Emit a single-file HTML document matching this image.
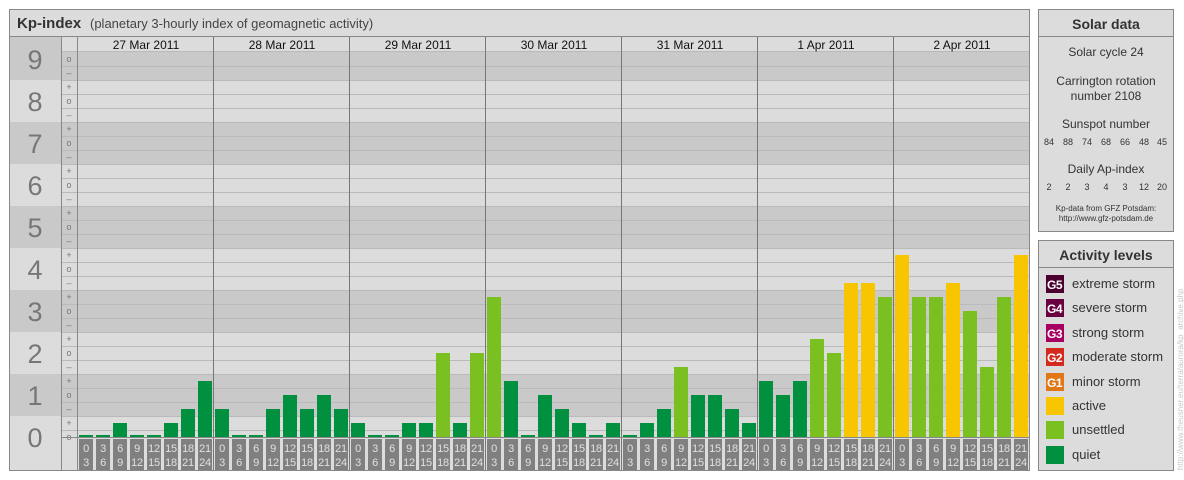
<!DOCTYPE html>
<html><head><meta charset="utf-8"><style>
html,body{margin:0;padding:0;background:#fff;width:1184px;height:480px;overflow:hidden}
svg text{font-family:"Liberation Sans",Arial,sans-serif}
</style></head><body>
<svg width="1184" height="480" viewBox="0 0 1184 480" xmlns="http://www.w3.org/2000/svg">
<rect x="0" y="0" width="1184" height="480" fill="#fff"/>
<!-- main panel -->
<rect x="9.5" y="9.5" width="1020" height="461" fill="#dcdcdc" stroke="#888"/>
<line x1="10" y1="36.5" x2="1029" y2="36.5" stroke="#888"/>
<text x="17" y="28" font-size="15" font-weight="bold" fill="#333">Kp-index</text>
<text x="90" y="28" font-size="13" fill="#444">(planetary 3-hourly index of geomagnetic activity)</text>
<!-- bands -->
<g fill="#c9c9c9">
<rect x="10" y="37" width="51" height="43"/><rect x="62" y="52" width="967" height="28"/>
<rect x="10" y="122" width="51" height="42"/><rect x="62" y="122" width="967" height="42"/>
<rect x="10" y="206" width="51" height="42"/><rect x="62" y="206" width="967" height="42"/>
<rect x="10" y="290" width="51" height="42"/><rect x="62" y="290" width="967" height="42"/>
<rect x="10" y="374" width="51" height="42"/><rect x="62" y="374" width="967" height="42"/>
</g>
<g stroke="#bababa" stroke-width="1">
<line x1="62" x2="1029" y1="430.5" y2="430.5"/><line x1="62" x2="1029" y1="416.5" y2="416.5"/><line x1="62" x2="1029" y1="402.5" y2="402.5"/><line x1="62" x2="1029" y1="388.5" y2="388.5"/><line x1="62" x2="1029" y1="374.5" y2="374.5"/><line x1="62" x2="1029" y1="360.5" y2="360.5"/><line x1="62" x2="1029" y1="346.5" y2="346.5"/><line x1="62" x2="1029" y1="332.5" y2="332.5"/><line x1="62" x2="1029" y1="318.5" y2="318.5"/><line x1="62" x2="1029" y1="304.5" y2="304.5"/><line x1="62" x2="1029" y1="290.5" y2="290.5"/><line x1="62" x2="1029" y1="276.5" y2="276.5"/><line x1="62" x2="1029" y1="262.5" y2="262.5"/><line x1="62" x2="1029" y1="248.5" y2="248.5"/><line x1="62" x2="1029" y1="234.5" y2="234.5"/><line x1="62" x2="1029" y1="220.5" y2="220.5"/><line x1="62" x2="1029" y1="206.5" y2="206.5"/><line x1="62" x2="1029" y1="192.5" y2="192.5"/><line x1="62" x2="1029" y1="178.5" y2="178.5"/><line x1="62" x2="1029" y1="164.5" y2="164.5"/><line x1="62" x2="1029" y1="150.5" y2="150.5"/><line x1="62" x2="1029" y1="136.5" y2="136.5"/><line x1="62" x2="1029" y1="122.5" y2="122.5"/><line x1="62" x2="1029" y1="108.5" y2="108.5"/><line x1="62" x2="1029" y1="94.5" y2="94.5"/><line x1="62" x2="1029" y1="80.5" y2="80.5"/><line x1="62" x2="1029" y1="66.5" y2="66.5"/><line x1="62" x2="1029" y1="51.5" y2="51.5"/>
</g>
<!-- columns -->
<g stroke="#888"><line x1="61.5" y1="37" x2="61.5" y2="470"/><line x1="77.5" y1="37" x2="77.5" y2="470"/></g>
<g stroke="#777"><line x1="213.5" y1="37" x2="213.5" y2="470"/><line x1="349.5" y1="37" x2="349.5" y2="470"/><line x1="485.5" y1="37" x2="485.5" y2="470"/><line x1="621.5" y1="37" x2="621.5" y2="470"/><line x1="757.5" y1="37" x2="757.5" y2="470"/><line x1="893.5" y1="37" x2="893.5" y2="470"/></g>
<!-- big digits -->
<g font-size="27" fill="#777" text-anchor="middle">
<text x="35" y="69">9</text><text x="35" y="111">8</text><text x="35" y="153">7</text><text x="35" y="195">6</text><text x="35" y="237">5</text><text x="35" y="279">4</text><text x="35" y="321">3</text><text x="35" y="363">2</text><text x="35" y="405">1</text><text x="35" y="447">0</text>
</g>
<!-- small labels -->
<g font-size="9" fill="#777" text-anchor="middle">
<text x="69" y="62">o</text><text x="69" y="76">–</text><text x="69" y="90">+</text><text x="69" y="104">o</text><text x="69" y="118">–</text><text x="69" y="132">+</text><text x="69" y="146">o</text><text x="69" y="160">–</text><text x="69" y="174">+</text><text x="69" y="188">o</text><text x="69" y="202">–</text><text x="69" y="216">+</text><text x="69" y="230">o</text><text x="69" y="244">–</text><text x="69" y="258">+</text><text x="69" y="272">o</text><text x="69" y="286">–</text><text x="69" y="300">+</text><text x="69" y="314">o</text><text x="69" y="328">–</text><text x="69" y="342">+</text><text x="69" y="356">o</text><text x="69" y="370">–</text><text x="69" y="384">+</text><text x="69" y="398">o</text><text x="69" y="412">–</text><text x="69" y="426">+</text><text x="69" y="440">o</text>
</g>
<!-- dates -->
<g font-size="12" fill="#111" text-anchor="middle">
<text x="146" y="49">27 Mar 2011</text><text x="282" y="49">28 Mar 2011</text><text x="418" y="49">29 Mar 2011</text><text x="554" y="49">30 Mar 2011</text><text x="690" y="49">31 Mar 2011</text><text x="826" y="49">1 Apr 2011</text><text x="962" y="49">2 Apr 2011</text>
</g>
<!-- bars -->
<g>
<g fill="#009040">
<rect x="79" y="435" width="14" height="2"/><rect x="96" y="435" width="14" height="2"/><rect x="113" y="423" width="14" height="14"/><rect x="130" y="435" width="14" height="2"/><rect x="147" y="435" width="14" height="2"/><rect x="164" y="423" width="14" height="14"/><rect x="181" y="409" width="14" height="28"/><rect x="198" y="381" width="14" height="56"/>
<rect x="215" y="409" width="14" height="28"/><rect x="232" y="435" width="14" height="2"/><rect x="249" y="435" width="14" height="2"/><rect x="266" y="409" width="14" height="28"/><rect x="283" y="395" width="14" height="42"/><rect x="300" y="409" width="14" height="28"/><rect x="317" y="395" width="14" height="42"/><rect x="334" y="409" width="14" height="28"/>
<rect x="351" y="423" width="14" height="14"/><rect x="368" y="435" width="14" height="2"/><rect x="385" y="435" width="14" height="2"/><rect x="402" y="423" width="14" height="14"/><rect x="419" y="423" width="14" height="14"/><rect x="453" y="423" width="14" height="14"/>
<rect x="504" y="381" width="14" height="56"/><rect x="521" y="435" width="14" height="2"/><rect x="538" y="395" width="14" height="42"/><rect x="555" y="409" width="14" height="28"/><rect x="572" y="423" width="14" height="14"/><rect x="589" y="435" width="14" height="2"/><rect x="606" y="423" width="14" height="14"/>
<rect x="623" y="435" width="14" height="2"/><rect x="640" y="423" width="14" height="14"/><rect x="657" y="409" width="14" height="28"/><rect x="691" y="395" width="14" height="42"/><rect x="708" y="395" width="14" height="42"/><rect x="725" y="409" width="14" height="28"/><rect x="742" y="423" width="14" height="14"/>
<rect x="759" y="381" width="14" height="56"/><rect x="776" y="395" width="14" height="42"/><rect x="793" y="381" width="14" height="56"/>
</g>
<g fill="#7ac020">
<rect x="436" y="353" width="14" height="84"/><rect x="470" y="353" width="14" height="84"/>
<rect x="487" y="297" width="14" height="140"/>
<rect x="674" y="367" width="14" height="70"/>
<rect x="810" y="339" width="14" height="98"/><rect x="827" y="353" width="14" height="84"/><rect x="878" y="297" width="14" height="140"/>
<rect x="912" y="297" width="14" height="140"/><rect x="929" y="297" width="14" height="140"/><rect x="963" y="311" width="14" height="126"/><rect x="980" y="367" width="14" height="70"/><rect x="997" y="297" width="14" height="140"/>
</g>
<g fill="#f8c600">
<rect x="844" y="283" width="14" height="154"/><rect x="861" y="283" width="14" height="154"/>
<rect x="895" y="255" width="14" height="182"/><rect x="946" y="283" width="14" height="154"/><rect x="1014" y="255" width="14" height="182"/>
</g>
</g>
<!-- time labels -->
<defs></defs>
<g font-size="11" fill="#e0e0e0" text-anchor="middle" letter-spacing="-0.3">
<g transform="translate(79,0)">
<g fill="#808080"><rect x="0" y="439" width="14" height="31"/><rect x="17" y="439" width="14" height="31"/><rect x="34" y="439" width="14" height="31"/><rect x="51" y="439" width="14" height="31"/><rect x="68" y="439" width="14" height="31"/><rect x="85" y="439" width="14" height="31"/><rect x="102" y="439" width="14" height="31"/><rect x="119" y="439" width="14" height="31"/></g>
<text x="7" y="452">0</text><text x="7" y="466">3</text><text x="24" y="452">3</text><text x="24" y="466">6</text><text x="41" y="452">6</text><text x="41" y="466">9</text><text x="58" y="452">9</text><text x="58" y="466">12</text><text x="75" y="452">12</text><text x="75" y="466">15</text><text x="92" y="452">15</text><text x="92" y="466">18</text><text x="109" y="452">18</text><text x="109" y="466">21</text><text x="126" y="452">21</text><text x="126" y="466">24</text>
</g>
<g transform="translate(215,0)">
<g fill="#808080"><rect x="0" y="439" width="14" height="31"/><rect x="17" y="439" width="14" height="31"/><rect x="34" y="439" width="14" height="31"/><rect x="51" y="439" width="14" height="31"/><rect x="68" y="439" width="14" height="31"/><rect x="85" y="439" width="14" height="31"/><rect x="102" y="439" width="14" height="31"/><rect x="119" y="439" width="14" height="31"/></g>
<text x="7" y="452">0</text><text x="7" y="466">3</text><text x="24" y="452">3</text><text x="24" y="466">6</text><text x="41" y="452">6</text><text x="41" y="466">9</text><text x="58" y="452">9</text><text x="58" y="466">12</text><text x="75" y="452">12</text><text x="75" y="466">15</text><text x="92" y="452">15</text><text x="92" y="466">18</text><text x="109" y="452">18</text><text x="109" y="466">21</text><text x="126" y="452">21</text><text x="126" y="466">24</text>
</g>
<g transform="translate(351,0)">
<g fill="#808080"><rect x="0" y="439" width="14" height="31"/><rect x="17" y="439" width="14" height="31"/><rect x="34" y="439" width="14" height="31"/><rect x="51" y="439" width="14" height="31"/><rect x="68" y="439" width="14" height="31"/><rect x="85" y="439" width="14" height="31"/><rect x="102" y="439" width="14" height="31"/><rect x="119" y="439" width="14" height="31"/></g>
<text x="7" y="452">0</text><text x="7" y="466">3</text><text x="24" y="452">3</text><text x="24" y="466">6</text><text x="41" y="452">6</text><text x="41" y="466">9</text><text x="58" y="452">9</text><text x="58" y="466">12</text><text x="75" y="452">12</text><text x="75" y="466">15</text><text x="92" y="452">15</text><text x="92" y="466">18</text><text x="109" y="452">18</text><text x="109" y="466">21</text><text x="126" y="452">21</text><text x="126" y="466">24</text>
</g>
<g transform="translate(487,0)">
<g fill="#808080"><rect x="0" y="439" width="14" height="31"/><rect x="17" y="439" width="14" height="31"/><rect x="34" y="439" width="14" height="31"/><rect x="51" y="439" width="14" height="31"/><rect x="68" y="439" width="14" height="31"/><rect x="85" y="439" width="14" height="31"/><rect x="102" y="439" width="14" height="31"/><rect x="119" y="439" width="14" height="31"/></g>
<text x="7" y="452">0</text><text x="7" y="466">3</text><text x="24" y="452">3</text><text x="24" y="466">6</text><text x="41" y="452">6</text><text x="41" y="466">9</text><text x="58" y="452">9</text><text x="58" y="466">12</text><text x="75" y="452">12</text><text x="75" y="466">15</text><text x="92" y="452">15</text><text x="92" y="466">18</text><text x="109" y="452">18</text><text x="109" y="466">21</text><text x="126" y="452">21</text><text x="126" y="466">24</text>
</g>
<g transform="translate(623,0)">
<g fill="#808080"><rect x="0" y="439" width="14" height="31"/><rect x="17" y="439" width="14" height="31"/><rect x="34" y="439" width="14" height="31"/><rect x="51" y="439" width="14" height="31"/><rect x="68" y="439" width="14" height="31"/><rect x="85" y="439" width="14" height="31"/><rect x="102" y="439" width="14" height="31"/><rect x="119" y="439" width="14" height="31"/></g>
<text x="7" y="452">0</text><text x="7" y="466">3</text><text x="24" y="452">3</text><text x="24" y="466">6</text><text x="41" y="452">6</text><text x="41" y="466">9</text><text x="58" y="452">9</text><text x="58" y="466">12</text><text x="75" y="452">12</text><text x="75" y="466">15</text><text x="92" y="452">15</text><text x="92" y="466">18</text><text x="109" y="452">18</text><text x="109" y="466">21</text><text x="126" y="452">21</text><text x="126" y="466">24</text>
</g>
<g transform="translate(759,0)">
<g fill="#808080"><rect x="0" y="439" width="14" height="31"/><rect x="17" y="439" width="14" height="31"/><rect x="34" y="439" width="14" height="31"/><rect x="51" y="439" width="14" height="31"/><rect x="68" y="439" width="14" height="31"/><rect x="85" y="439" width="14" height="31"/><rect x="102" y="439" width="14" height="31"/><rect x="119" y="439" width="14" height="31"/></g>
<text x="7" y="452">0</text><text x="7" y="466">3</text><text x="24" y="452">3</text><text x="24" y="466">6</text><text x="41" y="452">6</text><text x="41" y="466">9</text><text x="58" y="452">9</text><text x="58" y="466">12</text><text x="75" y="452">12</text><text x="75" y="466">15</text><text x="92" y="452">15</text><text x="92" y="466">18</text><text x="109" y="452">18</text><text x="109" y="466">21</text><text x="126" y="452">21</text><text x="126" y="466">24</text>
</g>
<g transform="translate(895,0)">
<g fill="#808080"><rect x="0" y="439" width="14" height="31"/><rect x="17" y="439" width="14" height="31"/><rect x="34" y="439" width="14" height="31"/><rect x="51" y="439" width="14" height="31"/><rect x="68" y="439" width="14" height="31"/><rect x="85" y="439" width="14" height="31"/><rect x="102" y="439" width="14" height="31"/><rect x="119" y="439" width="14" height="31"/></g>
<text x="7" y="452">0</text><text x="7" y="466">3</text><text x="24" y="452">3</text><text x="24" y="466">6</text><text x="41" y="452">6</text><text x="41" y="466">9</text><text x="58" y="452">9</text><text x="58" y="466">12</text><text x="75" y="452">12</text><text x="75" y="466">15</text><text x="92" y="452">15</text><text x="92" y="466">18</text><text x="109" y="452">18</text><text x="109" y="466">21</text><text x="126" y="452">21</text><text x="126" y="466">24</text>
</g>
</g>
<line x1="62" y1="437.5" x2="1029" y2="437.5" stroke="#888"/>

<!-- Solar data panel -->
<rect x="1038.5" y="9.5" width="135" height="222" fill="#dcdcdc" stroke="#888"/>
<line x1="1039" y1="36.5" x2="1173" y2="36.5" stroke="#888"/>
<g text-anchor="middle" fill="#333">
<text x="1106" y="29" font-size="14" font-weight="bold">Solar data</text>
<text x="1106" y="56" font-size="12">Solar cycle 24</text>
<text x="1106" y="85" font-size="12">Carrington rotation</text>
<text x="1106" y="100" font-size="12">number 2108</text>
<text x="1106" y="128" font-size="12">Sunspot number</text>
<text x="1106" y="173" font-size="12">Daily Ap-index</text>
<text x="1106" y="211" font-size="8">Kp-data from GFZ Potsdam:</text>
<text x="1106" y="221" font-size="8">http://www.gfz-potsdam.de</text>
</g>
<g text-anchor="middle" fill="#333" font-size="9">
<text x="1049" y="145">84</text><text x="1068" y="145">88</text><text x="1087" y="145">74</text><text x="1106" y="145">68</text><text x="1125" y="145">66</text><text x="1144" y="145">48</text><text x="1162" y="145">45</text>
<text x="1049" y="190">2</text><text x="1068" y="190">2</text><text x="1087" y="190">3</text><text x="1106" y="190">4</text><text x="1125" y="190">3</text><text x="1144" y="190">12</text><text x="1162" y="190">20</text>
</g>

<!-- Activity levels panel -->
<rect x="1038.5" y="240.5" width="135" height="230" fill="#dcdcdc" stroke="#888"/>
<line x1="1039" y1="267.5" x2="1173" y2="267.5" stroke="#888"/>
<text x="1106" y="260" font-size="14" font-weight="bold" fill="#333" text-anchor="middle">Activity levels</text>
<rect x="1046" y="275" width="18" height="18" fill="#4c0030"/>
<rect x="1046" y="299" width="18" height="18" fill="#6a0040"/>
<rect x="1046" y="324" width="18" height="18" fill="#a80060"/>
<rect x="1046" y="348" width="18" height="18" fill="#d42a1e"/>
<rect x="1046" y="373" width="18" height="18" fill="#e07818"/>
<rect x="1046" y="397" width="18" height="18" fill="#f8c600"/>
<rect x="1046" y="421" width="18" height="18" fill="#7ac020"/>
<rect x="1046" y="446" width="18" height="18" fill="#009040"/>
<g font-size="12" fill="#fff" font-weight="bold" letter-spacing="-0.5">
<text x="1047" y="289">G5</text><text x="1047" y="313">G4</text><text x="1047" y="338">G3</text><text x="1047" y="362">G2</text><text x="1047" y="387">G1</text>
</g>
<g font-size="13" fill="#333">
<text x="1072" y="288">extreme storm</text>
<text x="1072" y="312">severe storm</text>
<text x="1072" y="337">strong storm</text>
<text x="1072" y="361">moderate storm</text>
<text x="1072" y="386">minor storm</text>
<text x="1072" y="410">active</text>
<text x="1072" y="434">unsettled</text>
<text x="1072" y="459">quiet</text>
</g>
<text transform="translate(1183,470) rotate(-90)" font-size="8" fill="#c8c8c8">http://www.theusner.eu/terra/aurora/kp_archive.php</text>
</svg>
</body></html>
